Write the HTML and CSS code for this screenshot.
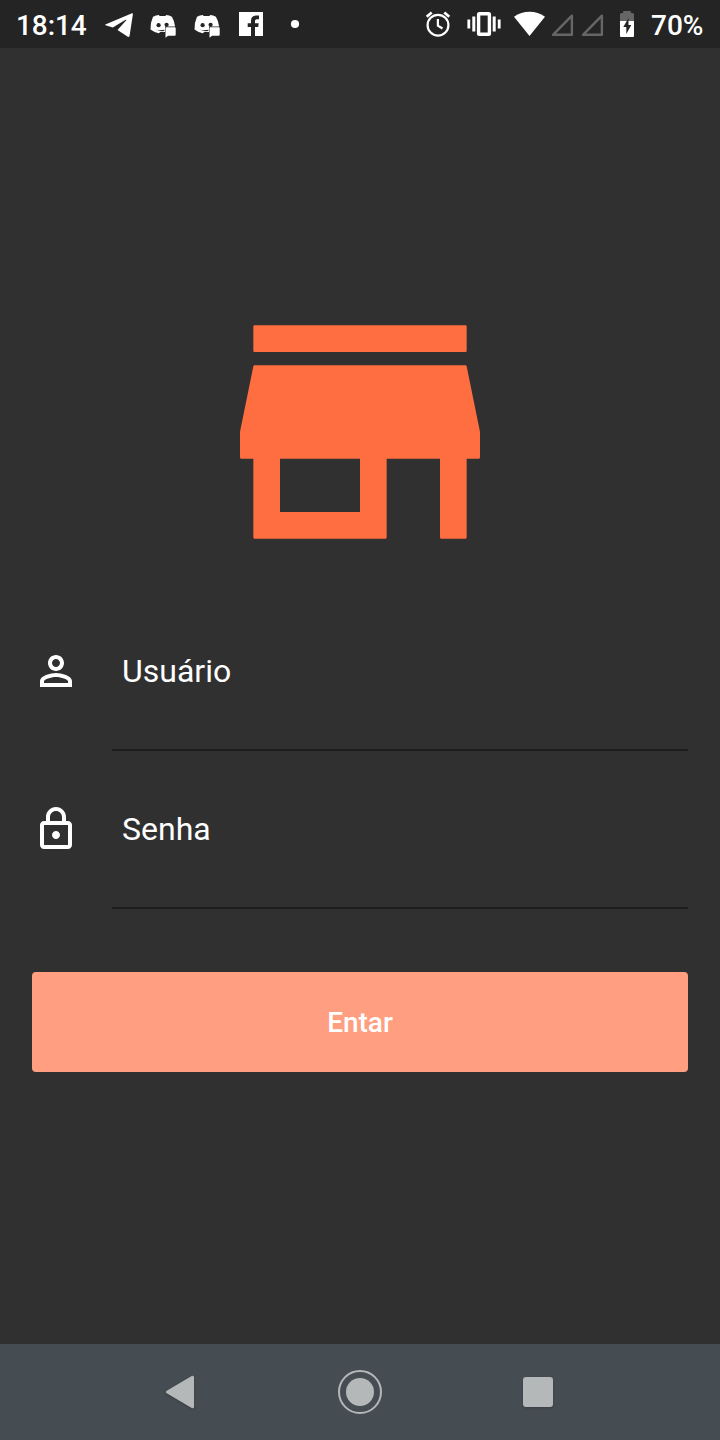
FILE: index.html
```html
<!DOCTYPE html>
<html lang="pt-BR">
<head>
<meta charset="utf-8">
<title>Entrar</title>
<link rel="stylesheet" href="styles.css">
</head>
<body>
<div class="screen">
  <header class="status">
    <span class="time">18:14</span>
    <svg width="44" height="48" viewBox="97 0 44 48"><path d="M105.300 24.500 132 13.200q1-.2.9 1L129.600 35.700q-.5 1.800-2.200.9L117.500 30l8.800-9.800q.3-.8-.7-.4L112.800 27.600l-7.300-2.300q-.5-.4-.2-.8z"/></svg>
    <svg width="44" height="48" viewBox="141 0 44 48"><use href="#discord"/></svg>
    <svg width="44" height="48" viewBox="141 0 44 48"><g id="discord"><path d="M153 16.800q3-1.700 5.900-1.800l.7 1h5.800l.8-1q3 .2 5.700 1.800 2.700 4.500 3.200 9.700H165v5.500l-4.300-.2-2 1.400q-4.500-.7-8.200-3.600-.2-7 2.500-12.800z"/><g class="cut"><circle cx="158.600" cy="25.200" r="2.100"/><circle cx="166.600" cy="24.800" r="2.100"/><path d="M155.500 29.500q4.500 2 9 1.200v-1q-4.500.8-9-.2z"/></g><path d="M166 27.300h8.700q1 0 1 1v6.500q0 1-1 1H168l-2.500 2v-9.500q0-1 .5-1z"/></g></svg>
    <svg width="44" height="48" viewBox="229 0 44 48"><path d="M239 12h24v24h-24z"/><path class="cut" d="M251 36v-9h-3.300v-3.700h3.300v-2.500q0-5.300 5.300-5.300h2.700v3.800h-2.200q-1.800 0-1.800 1.800v2.200h3.700l-.5 3.700H255v9z"/></svg>
    <svg width="44" height="48" viewBox="273 0 44 48"><circle cx="295" cy="24" r="4.100"/></svg>
    <div class="system">
      <svg width="40" height="48" viewBox="420 0 40 48"><g class="line"><circle cx="438" cy="25.200" r="10.400"/><path class="bells" d="m426.700 16.700 5-4.200m17.600 4.200-5-4.200"/><path d="M437.900 19v6.700l4.600 2.800"/></g></svg>
      <svg width="50" height="48" viewBox="460 0 50 48"><rect class="phone" x="478.600" y="13.700" width="10.800" height="20.600" rx=".8"/><path d="M472.300 16.500h3v15h-3zM467.400 19.500h2.800v9h-2.800zM492.700 16.500h3v15h-3zM497.800 19.500h2.800v9h-2.800z"/></svg>
      <svg width="38" height="48" viewBox="510 0 38 48"><path d="M514 16.800q7-5.100 15.500-5.100t15.500 5.100L529.500 36z"/></svg>
      <svg width="30" height="48" viewBox="548 0 30 48"><path class="signal" d="M571.900 15.700V34.800h-18.900z"/></svg>
      <svg width="30" height="48" viewBox="548 0 30 48"><path class="signal" d="M571.900 15.700V34.800h-18.900z"/></svg>
      <svg width="43" height="48" viewBox="608 0 43 48"><path class="dim" d="M620 21v-6.500q0-1.500 1.500-1.500h1.700v-2h7.600v2h1.700q1.500 0 1.500 1.500V21z"/><path d="M620 21h14v15q0 1-1 1h-12q-1 0-1-1z"/><path class="cut" d="m628.500 18-5.200 9h3v7l5-9h-2.800z"/></svg>
      <span>70%</span>
    </div>
  </header>
  <main class="login">
    <svg class="logo" viewBox="0 0 24 24"><path d="M19.920 4.080H4.080v1.840h15.840zM20.920 13.920V12l-1-4.920H4.080L3.080 12v1.920h1v6h9.840v-6h4.160v6h1.840v-6zM12.080 18.080H5.920v-4.160h6.160z"/></svg>
    <div class="row">
      <svg width="48" height="48" viewBox="0 0 24 24"><path d="M12 6c1.100 0 2 .9 2 2s-.9 2-2 2-2-.9-2-2 .9-2 2-2m0 9c2.700 0 5.800 1.290 6 2v1H6v-.99c.2-.72 3.300-2.010 6-2.010m0-11C9.790 4 8 5.790 8 8s1.790 4 4 4 4-1.790 4-4-1.790-4-4-4zm0 9c-2.670 0-8 1.340-8 4v3h16v-3c0-2.660-5.330-4-8-4z"/></svg>
      <div class="field">Usuário</div>
    </div>
    <div class="row">
      <svg width="48" height="48" viewBox="0 0 24 24"><path d="M12 17c1.100 0 2-.9 2-2s-.9-2-2-2-2 .9-2 2 .9 2 2 2zm6-9h-1V6c0-2.760-2.240-5-5-5S7 3.240 7 6v2H6c-1.100 0-2 .9-2 2v10c0 1.100.9 2 2 2h12c1.100 0 2-.9 2-2V10c0-1.100-.9-2-2-2zM9 6c0-1.660 1.340-3 3-3s3 1.340 3 3v2H9V6zM18 20H6V10h12v10z"/></svg>
      <div class="field">Senha</div>
    </div>
    <button class="submit" type="button">Entar</button>
  </main>
  <nav class="nav">
    <svg width="720" height="96" viewBox="0 1344 720 96"><g class="shadow"><path class="back" d="m167.500 1392 25-14.800v29.600z"/><rect x="523" y="1377" width="30" height="30" rx="3"/></g><circle class="ring" cx="360" cy="1392" r="21"/><circle cx="360" cy="1392" r="14"/></svg>
  </nav>
</div>
</body>
</html>
```
FILE: styles.css
```css
* { box-sizing: border-box; }
body { margin: 0; background: #303030; color: #fff; font-family: Roboto, sans-serif; }
svg { display: block; flex: none; fill: #fff; }
.screen { display: flex; flex-direction: column; width: 720px; height: 1440px; }
.status { display: flex; align-items: center; height: 48px; padding: 0 16px; background: #242424; font-size: 28px; font-weight: 500; line-height: 48px; }
.time { width: 81px; padding-top: 3px; letter-spacing: -.1px; }
.cut { fill: #242424; }
.line { fill: none; stroke: #fff; stroke-width: 2.200; }
.bells { stroke-width: 2.800; }
.phone { fill: none; stroke: #fff; stroke-width: 3.400; }
.signal { fill: none; stroke: #666; stroke-width: 2.400; stroke-linejoin: round; }
.dim { fill: #666; }
.system { display: flex; align-items: center; margin-left: 103px; }
.system span { padding-top: 3px; }
.login { flex: 1; display: flex; flex-direction: column; padding: 224px 32px 0; }
.logo { width: 320px; height: 320px; margin-bottom: 1px; align-self: center; fill: #ff6e40; stroke: #ff6e40; stroke-width: .16; stroke-linejoin: round; }
.row { display: flex; align-items: center; gap: 32px; height: 158px; }
.row svg { margin-bottom: 2px; }
.field { flex: 1; height: 158px; padding: 0 10px; border-bottom: 2px solid #1e1e1e; font-size: 32px; line-height: 156px; }
.submit { height: 100px; margin-top: 63px; border: 0; border-radius: 4px; background: #ff9e80; color: #fff; font: 500 28px Roboto, sans-serif; }
.nav { height: 96px; background: #464d52; }
.nav svg { fill: #b4b8b9; }
.back { stroke: #b4b8b9; stroke-width: 3; stroke-linejoin: round; }
.ring { fill: none; stroke: #b4b8b9; stroke-width: 2; }
.shadow { filter: drop-shadow(0 1px 1px rgba(0, 0, 0, .2)); }
```
